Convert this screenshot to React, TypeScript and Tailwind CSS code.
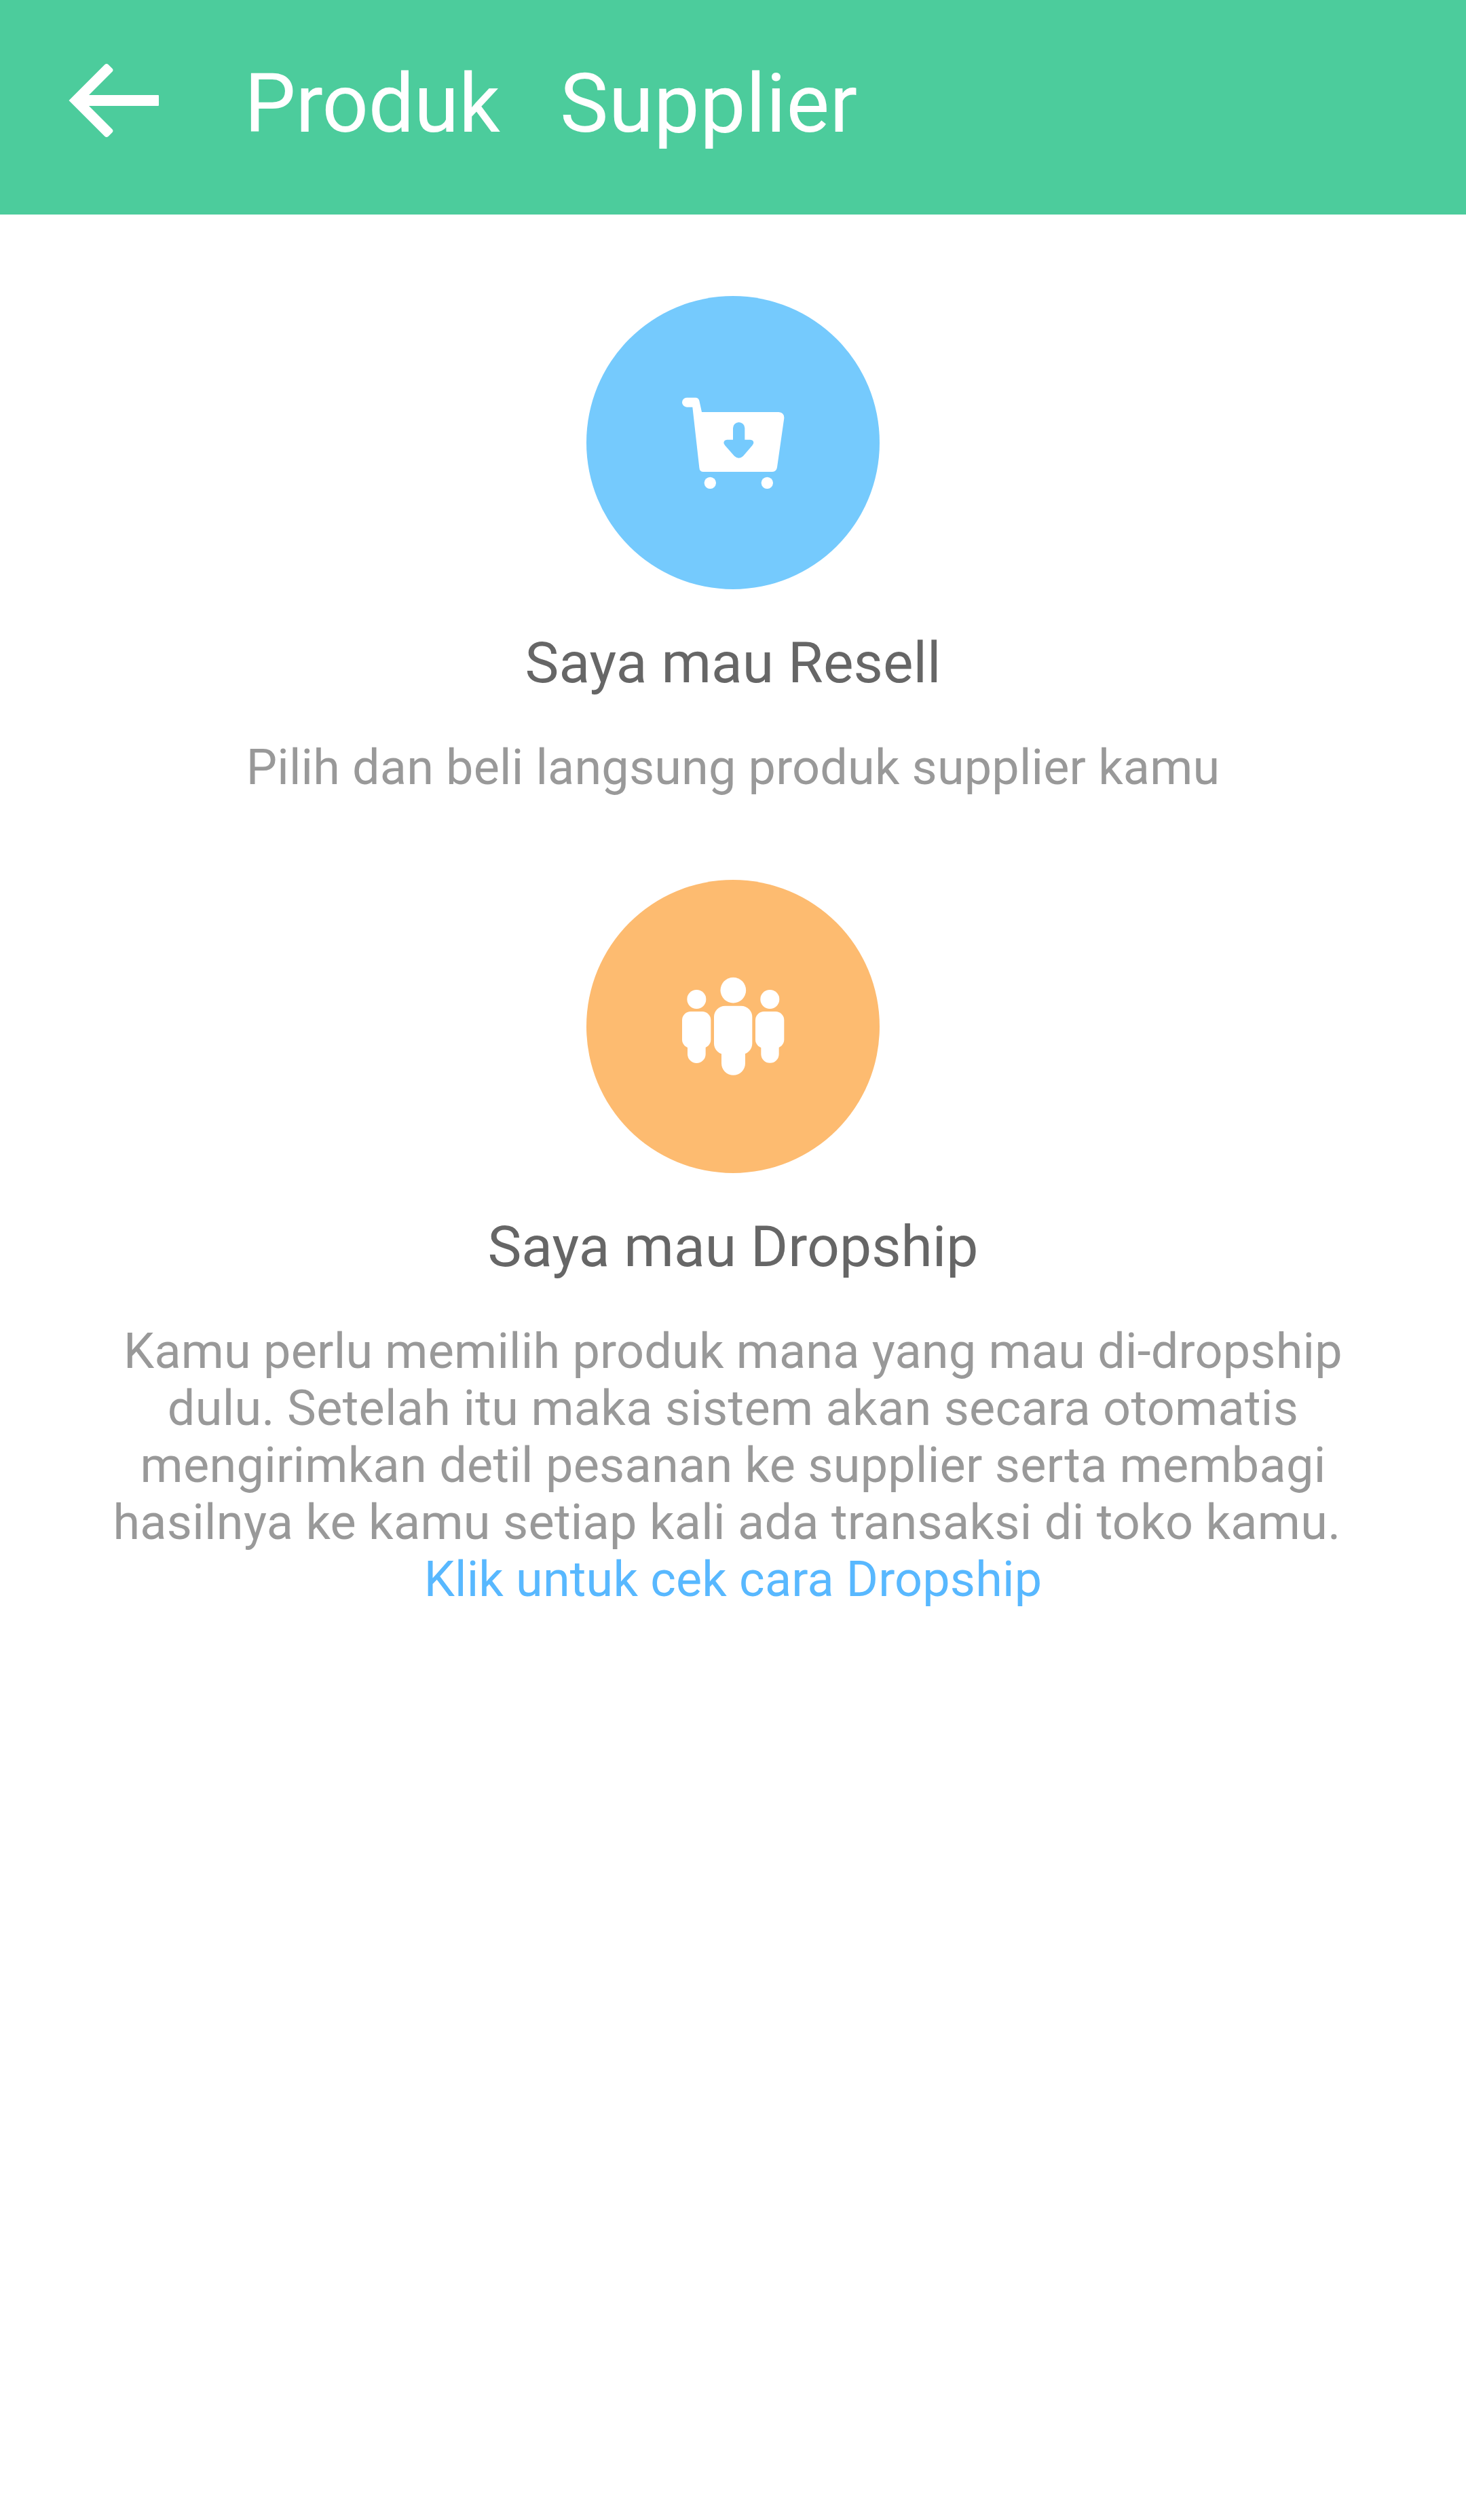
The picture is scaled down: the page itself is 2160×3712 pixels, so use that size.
import type { ReactNode } from 'react';

function BackArrow() {
  return (
    <svg className="h-[110px] w-[136px]" viewBox="100 93 136 110" fill="white">
      <path d="M101.5 148 L154.5 95 Q157 92.8 159.5 95 L165.5 101 Q167.5 103.2 165.5 105.5 L131 140 H233 Q234 140 234 141 V155 Q234 156 233 156 H131 L165.5 190.500 Q167.5 192.800 165.5 195 L159.500 201 Q157 203.200 154.500 201 Z" />
    </svg>
  );
}

function CartIcon() {
  return (
    <svg className="h-[180px] w-[200px]" viewBox="0 6 600 540">
      <path
        fill="white"
        d="M96 77 H134 Q148 77 151 91 L162 141 H502 Q527 143 526 168 L495 385 Q492 405 474 405 H170 Q152 405 151 386 L121 119 H96 A21 21 0 0 1 96 77 Z"
      />
      <path
        fill="#75cafd"
        d="M300 263 V212 A26 26 0 0 1 352 212 V263 H376 Q391 264 391 277 Q390 283 385 289 L345 335 Q326 353 306 335 L265 289 Q260 283 259 277 Q260 264 274 263 Z"
      />
      <circle cx="199" cy="454" r="26" fill="white" />
      <circle cx="451" cy="454" r="26" fill="white" />
    </svg>
  );
}

function PeopleIcon() {
  return (
    <svg className="h-[180px] w-[200px]" viewBox="0 6 600 540" fill="white">
      <circle cx="139" cy="156" r="42" />
      <rect x="75" y="210" width="127" height="162" rx="38" />
      <path d="M99 350 H179 V398 A40 40 0 0 1 99 398 Z" />
      <circle cx="301" cy="116" r="56.500" />
      <rect x="216" y="185" width="169" height="215" rx="49" />
      <path d="M249 375 H354 V439 A52.500 52.500 0 0 1 249 439 Z" />
      <circle cx="463" cy="156" r="42" />
      <rect x="399" y="210" width="127" height="162" rx="38" />
      <path d="M424 350 H503 V398 A39.500 39.500 0 0 1 424 398 Z" />
    </svg>
  );
}

type OptionProps = {
  icon: ReactNode;
  circleClass: string;
  title: string;
  children: ReactNode;
};

function Option({ icon, circleClass, title, children }: OptionProps) {
  return (
    <section className="flex w-full flex-col items-center text-center">
      <button
        aria-label={title}
        className={`flex size-[432px] items-center justify-center rounded-full ${circleClass}`}
      >
        {icon}
      </button>
      <h2 className="mt-[59px] text-[84px] leading-[100px] tracking-[0.06px] text-[#666666]">{title}</h2>
      <p className="mt-[62px] text-[72px] leading-[84px] text-[#999999]">{children}</p>
    </section>
  );
}

export default function App() {
  return (
    <div className="min-h-screen w-full bg-white font-['Roboto',sans-serif]">
      <header className="flex h-[316px] items-start bg-[#4ccc9c] pl-[100px] text-white">
        <button aria-label="Kembali" className="mt-[93px]">
          <BackArrow />
        </button>
        <h1 className="mt-[83px] ml-[124px] text-[120px] leading-[140px] whitespace-pre">
          <span className="tracking-[-0.3px]">{'Produk   '}</span>
          <span className="tracking-[0.5px]">Supplier</span>
        </h1>
      </header>
      <main className="flex flex-col items-center gap-[123px] pt-[120px]">
        <Option icon={<CartIcon />} circleClass="bg-[#75cafd]" title="Saya mau Resell">
          <span className="tracking-[0.16px]">Pilih dan beli langsung produk supplier kamu</span>
        </Option>
        <Option icon={<PeopleIcon />} circleClass="bg-[#fdbb70]" title="Saya mau Dropship">
          <span className="tracking-[0.2px]">Kamu perlu memilih produk mana yang mau di-dropship</span>
          <br />
          <span className="tracking-[0.32px]">dulu. Setelah itu maka sistem akan secara otomatis</span>
          <br />
          <span className="tracking-[0.27px]">mengirimkan detil pesanan ke supplier serta membagi</span>
          <br />
          <span className="tracking-[0.3px] whitespace-pre">
            {'hasilnya ke kamu setiap kali ada transaksi di toko kamu. '}
          </span>
          <br />
          <a className="tracking-[0.17px] text-[#58b8ff]">Klik untuk cek cara Dropship</a>
        </Option>
      </main>
    </div>
  );
}
